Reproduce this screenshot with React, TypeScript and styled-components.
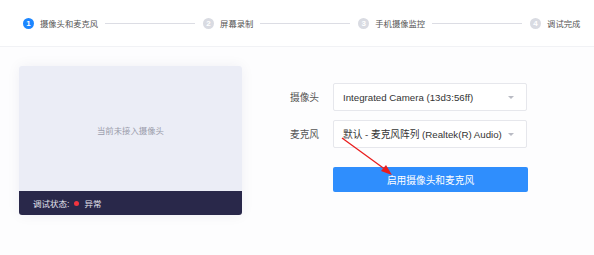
import React from "react";
import styled, { createGlobalStyle } from "styled-components";

const GlobalStyle = createGlobalStyle`
  html, body {
    margin: 0;
    padding: 0;
    background: #ffffff;
  }
  body {
    font-family: "Liberation Sans", "Noto Sans CJK SC", sans-serif;
    color: #333;
  }
`;

const Page = styled.div`
  position: relative;
  width: 594px;
  height: 255px;
  background: #fdfdfe;
  overflow: hidden;
`;

const StepBar = styled.div`
  display: flex;
  align-items: center;
  height: 47px;
  padding-left: 23px;
  background: #ffffff;
  border-bottom: 1px solid #f1f2f5;
  box-sizing: border-box;
`;

const Step = styled.div`
  display: flex;
  align-items: center;
  gap: 6px;
`;

const StepDot = styled.span<{ $active?: boolean }>`
  width: 11px;
  height: 11px;
  border-radius: 50%;
  background: ${(p) => (p.$active ? "#1c86ff" : "#d9dbe2")};
  color: #fff;
  font-size: 8px;
  font-weight: bold;
  line-height: 11px;
  text-align: center;
`;

const StepLabel = styled.span`
  font-size: 8.3px;
  color: #555;
  white-space: nowrap;
`;

const StepLine = styled.div`
  width: 90px;
  height: 1px;
  background: #dcdde4;
  margin: 0 8px 0 7px;
`;

const Body = styled.div`
  display: flex;
  padding: 19px 0 0 19px;
  gap: 48px;
`;

const PreviewCard = styled.div`
  width: 223px;
  height: 149px;
  border-radius: 3px;
  overflow: hidden;
  display: flex;
  flex-direction: column;
  box-shadow: 0 0 14px rgba(40, 40, 80, 0.06);
`;

const Preview = styled.div`
  flex: 1;
  background: #ebedf6;
  display: flex;
  align-items: center;
  justify-content: center;
  font-size: 8.4px;
  color: #9a9cab;
  padding-top: 2px;
`;

const StatusBar = styled.div`
  height: 24px;
  background: #29284a;
  display: flex;
  align-items: center;
  padding-left: 14px;
  font-size: 8.5px;
  color: #e4e4ee;
`;

const RedDot = styled.span`
  display: inline-block;
  width: 5px;
  height: 5px;
  border-radius: 50%;
  background: #f1343f;
  margin: 0 5px 0 5px;
`;

const Form = styled.div`
  display: flex;
  flex-direction: column;
  padding-top: 17px;
`;

const Row = styled.div`
  display: flex;
  align-items: center;
  margin-bottom: 9px;
`;

const Label = styled.span`
  width: 43px;
  font-size: 9.7px;
  color: #555;
`;

const Select = styled.div`
  width: 194px;
  height: 28px;
  box-sizing: border-box;
  border: 1px solid #e6e7ec;
  border-radius: 2px;
  background: #fff;
  display: flex;
  align-items: center;
  justify-content: space-between;
  padding: 0 12px 0 9px;
  font-size: 9.7px;
  color: #333;
  white-space: nowrap;
`;

const Caret = styled.span`
  width: 0;
  height: 0;
  border-left: 3px solid transparent;
  border-right: 3px solid transparent;
  border-top: 3px solid #b9bbc4;
`;

const PrimaryButton = styled.button`
  margin-left: 43px;
  margin-top: 10px;
  width: 195px;
  height: 25px;
  border: none;
  border-radius: 2px;
  background: #2f8efd;
  color: #fff;
  font-family: inherit;
  font-size: 9.7px;
  padding: 0;
  cursor: pointer;
`;

const ArrowOverlay = styled.svg`
  position: absolute;
  left: 0;
  top: 0;
  pointer-events: none;
`;

const steps = ["摄像头和麦克风", "屏幕录制", "手机摄像监控", "调试完成"];

const App: React.FC = () => {
  return (
    <Page>
      <GlobalStyle />
      <StepBar>
        {steps.map((s, i) => (
          <React.Fragment key={s}>
            <Step>
              <StepDot $active={i === 0}>{i + 1}</StepDot>
              <StepLabel>{s}</StepLabel>
            </Step>
            {i < steps.length - 1 && <StepLine />}
          </React.Fragment>
        ))}
      </StepBar>

      <Body>
        <PreviewCard>
          <Preview>当前未接入摄像头</Preview>
          <StatusBar>
            调试状态:
            <RedDot />
            异常
          </StatusBar>
        </PreviewCard>

        <Form>
          <Row>
            <Label>摄像头</Label>
            <Select>
              <span>Integrated Camera (13d3:56ff)</span>
              <Caret />
            </Select>
          </Row>
          <Row>
            <Label>麦克风</Label>
            <Select>
              <span>默认 - 麦克风阵列 (Realtek(R) Audio)</span>
              <Caret />
            </Select>
          </Row>
          <PrimaryButton>启用摄像头和麦克风</PrimaryButton>
        </Form>
      </Body>

      <ArrowOverlay width="594" height="255">
        <line x1="342" y1="138" x2="386" y2="170" stroke="#ea1d1d" strokeWidth="1.3" />
        <polygon points="392,175 381,171 386,165" fill="#ea1d1d" />
      </ArrowOverlay>
    </Page>
  );
};

export default App;
